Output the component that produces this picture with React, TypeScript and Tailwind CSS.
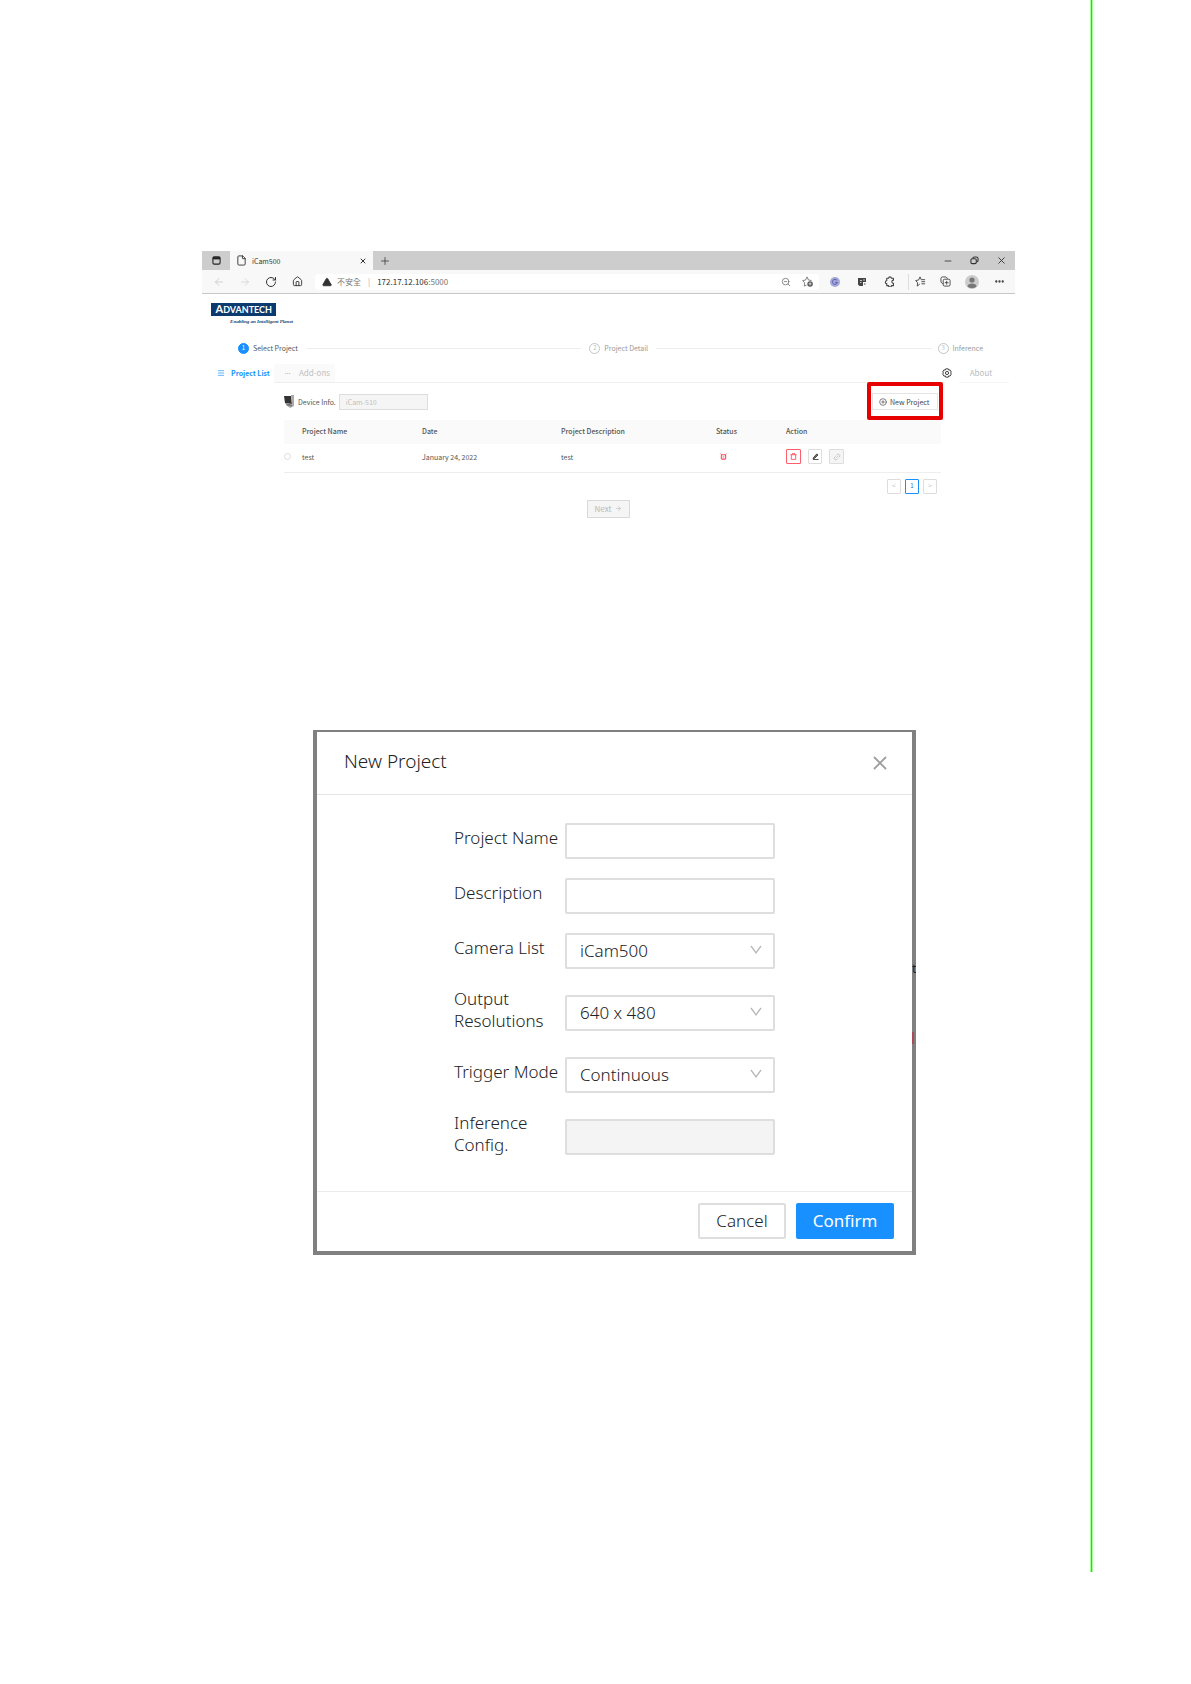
import type { ReactNode } from "react"
import {
  AlertTriangle,
  ArrowLeft,
  ArrowRight,
  CirclePlus,
  File,
  Home,
  Link2,
  Menu,
  Minus,
  MoreHorizontal,
  Plus,
  RotateCw,
  X,
  ZoomOut,
} from "lucide-react"

const toolButton = "flex h-4 w-4 items-center justify-center"

function TitleBar() {
  return (
    <div className="flex h-[19px] items-stretch bg-[#cdcdcd] text-[#333]">
      <button aria-label="Tab actions" className="flex w-7 items-center justify-center">
        <svg viewBox="0 0 10 10" className="h-[9px] w-[9px]" fill="none" stroke="#222">
          <rect x="1" y="1" width="8" height="8" rx="1.5" strokeWidth="1.2" />
          <path d="M1 2.5h8" strokeWidth="2.5" />
        </svg>
      </button>
      <div className="flex w-[143px] items-center bg-[#f8f8f8] px-1.5">
        <File size={11} strokeWidth={2} />
        <span className="ml-[5px] flex-1 text-[7px] leading-3">iCam500</span>
        <button aria-label="Close tab">
          <X size={8} strokeWidth={3} />
        </button>
      </div>
      <button aria-label="New tab" className="flex w-6 items-center justify-center">
        <Plus size={12} strokeWidth={1.5} />
      </button>
      <div className="ml-auto flex items-center gap-[17px] pr-2">
        <button aria-label="Minimize">
          <Minus size={10} strokeWidth={2} />
        </button>
        <button aria-label="Restore">
          <svg viewBox="0 0 10 10" className="h-[9px] w-[9px]" fill="none" stroke="#333" strokeWidth="1.2">
            <rect x="1" y="3" width="6" height="5.5" rx="1.5" />
            <path d="M3 2.5C3.3 1.5 4 1.2 5 1.2h2A2 2 0 0 1 9 3.2v1.5C9 6 8.5 6.5 7.5 6.7" />
          </svg>
        </button>
        <button aria-label="Close window">
          <X size={11} strokeWidth={2} />
        </button>
      </div>
    </div>
  )
}

function AddressBar() {
  return (
    <div className="flex h-6 items-center border-b border-[#c8c8c8] bg-[#f8f8f8] text-[#333]">
      <div className="flex items-center gap-2.5 pr-2.5 pl-[9px]">
        <button aria-label="Back" className={`${toolButton} text-[#c4c4c4]`}>
          <ArrowLeft size={12} strokeWidth={1.5} />
        </button>
        <button aria-label="Forward" className={`${toolButton} text-[#d0d0d0]`}>
          <ArrowRight size={12} strokeWidth={1.5} />
        </button>
        <button aria-label="Reload" className={toolButton}>
          <RotateCw size={12} strokeWidth={2} />
        </button>
        <button aria-label="Home" className={toolButton}>
          <Home size={11} strokeWidth={2} />
        </button>
      </div>
      <div className="flex h-4 flex-1 items-center rounded-sm bg-white pr-1 pl-[7px] text-[8px] leading-4">
        <AlertTriangle size={10} fill="#333" className="mr-[5px]" />
        <span className="text-[#777]">不安全</span>
        <span className="mx-[7px] text-[#aaa]">|</span>
        <span>
          172.17.12.106<span className="text-[#777]">:5000</span>
        </span>
        <button aria-label="Zoom" className={`${toolButton} ml-auto text-[#777]`}>
          <ZoomOut size={10} />
        </button>
        <button aria-label="Add to favorites" className={`${toolButton} ml-[5px]`}>
          <svg viewBox="0 0 12 12" className="h-[11px] w-[11px]" fill="none" stroke="#777" strokeLinejoin="round">
            <path d="M5 10 2.4 11l.5-3.6L.7 5l3.2-.6L5.5 1l1.6 3.4 3.3.5" />
            <circle cx="8.8" cy="8.6" r="3" fill="#555" stroke="none" />
            <path d="M8.8 7v3.2M7.2 8.6h3.2" stroke="#fff" strokeWidth=".8" />
          </svg>
        </button>
      </div>
      <div className="flex items-center gap-[11px] pr-2 pl-2">
        <button aria-label="Grammar extension" className={toolButton}>
          <svg viewBox="0 0 10 10" className="h-[10px] w-[10px]">
            <circle cx="5" cy="5" r="5" fill="#a3a8d8" />
            <path d="M7 3.4A2.5 2.5 0 1 0 7.4 5.4H5.2" fill="none" stroke="#5b62ac" strokeWidth="1" />
          </svg>
        </button>
        <button aria-label="Extension" className={toolButton}>
          <svg viewBox="0 0 10 10" className="h-[10px] w-[10px]">
            <path d="M1 1h8v4H6v4H2.5L1 7.5z" fill="#444" />
            <path d="M3 3.5h2M6 3h2M3 5.5h1.5" stroke="#ddd" strokeWidth=".8" />
            <path d="M7 7h1.5" stroke="#444" strokeWidth="1" />
          </svg>
        </button>
        <button aria-label="Extensions" className={toolButton}>
          <svg viewBox="0 0 12 12" className="h-[11px] w-[11px]" fill="none" stroke="#444" strokeWidth="1.2" strokeLinejoin="round">
            <path d="M3 2.500h2a1.500 1.500 0 0 1 3 0h2.300v2a1.700 1.700 0 0 0 0 3.500v2.500H8a1.500 1.500 0 0 1-3 0H3V8.300a1.600 1.600 0 0 1 0-3.200z" />
          </svg>
        </button>
        <button aria-label="Favorites" className="flex h-4 w-[18px] items-center justify-end border-l border-[#ddd]">
          <svg viewBox="0 0 12 12" className="h-[11px] w-[11px]" fill="none" stroke="#444" strokeLinejoin="round">
            <path d="M5.2 8.8 2.4 11l.5-3.6L.7 5l3.2-.6L5.5 1l1.3 3H11M7 6.2h4M7 8.5h4" />
          </svg>
        </button>
        <button aria-label="Collections" className={toolButton}>
          <svg viewBox="0 0 12 12" className="h-[11px] w-[11px]" fill="none" stroke="#444">
            <path d="M3.5 8.5C2 8.3 1 7 1 5.5V3a2 2 0 0 1 2-2h2.5C7 1 8 2 8.2 3" />
            <rect x="3.5" y="3.5" width="7.5" height="7.5" rx="1.5" />
            <path d="M7.250 5.3v4M5.250 7.3h4" />
          </svg>
        </button>
        <button aria-label="Profile" className={toolButton}>
          <svg viewBox="0 0 14 14" className="h-[14px] w-[14px]">
            <circle cx="7" cy="7" r="7" fill="#ccc" />
            <circle cx="7" cy="5" r="2.6" fill="#777" />
            <path d="M2.5 11.5c0-4 9-4 9 0-2.5 2.2-6.5 2.2-9 0z" fill="#777" />
          </svg>
        </button>
        <button aria-label="More" className={toolButton}>
          <MoreHorizontal size={11} strokeWidth={3} />
        </button>
      </div>
    </div>
  )
}

function Logo() {
  return (
    <div className="flex w-[82px] flex-col text-[#0b3a6e]">
      <div className="flex h-[13px] w-[65px] items-center justify-end bg-[#0b3a6e] pr-1 font-['Lato'] text-[11px] leading-3 font-bold text-white">
        <span>
          A<span className="text-[9px]">DVANTECH</span>
        </span>
      </div>
      <span className="self-end font-['Liberation_Serif'] text-[5px] leading-3 font-bold whitespace-nowrap italic">
        Enabling an Intelligent Planet
      </span>
    </div>
  )
}

function Step({ number, label, active = false }: { number: number; label: string; active?: boolean }) {
  return (
    <li className={`flex items-center gap-1 ${active ? "text-[#555]" : "text-[#999]"}`}>
      <span
        className={`flex h-[11px] w-[11px] items-center justify-center rounded-full border text-[6px] leading-none ${
          active ? "border-[#1890ff] bg-[#1890ff] text-white" : "border-[#c4c4c4] text-[#bbb]"
        }`}
      >
        {number}
      </span>
      {label}
    </li>
  )
}

function GearIcon() {
  return (
    <svg viewBox="0 0 12 12" className="h-[10px] w-[10px]" fill="none" stroke="#444" strokeWidth="1.2">
      <path d="M4.5 1h3l.5 1.5 1.7-.2 1.5 2.5L10.2 6l1 1.2-1.5 2.5L8 9.500 7.500 11h-3L4 9.500l-1.700.2L.8 7.200 1.800 6l-1-1.200 1.500-2.500L4 2.500z" />
      <circle cx="6" cy="6" r="1.9" />
    </svg>
  )
}

function DeviceIcon() {
  return (
    <svg viewBox="0 0 10 13" className="h-[13px] w-[10px]">
      <path d="M0 1h7l1 8-7-1z" fill="#333" />
      <path d="M7 0h3v11l-4 2-4-3 6 .5z" fill="#aaa" />
      <path d="M1 8l7 1.5v2L3 10.5z" fill="#777" />
    </svg>
  )
}

function ProjectTable() {
  return (
    <table className="w-full table-fixed text-left text-[#555]">
      <colgroup>
        <col className="w-[18px]" />
        <col className="w-[120px]" />
        <col className="w-[139px]" />
        <col className="w-[155px]" />
        <col className="w-[70px]" />
        <col />
      </colgroup>
      <thead>
        <tr className="h-6 bg-[#fafafa]">
          <th aria-label="Select" />
          <th className="pb-[3px] font-medium">Project Name</th>
          <th className="pb-[3px] font-medium">Date</th>
          <th className="pb-[3px] font-medium">Project Description</th>
          <th className="pb-[3px] font-medium">Status</th>
          <th className="pb-[3px] font-medium">Action</th>
        </tr>
      </thead>
      <tbody>
        <tr className="h-7 border-b border-[#eee]">
          <td className="pb-0.5">
            <input
              type="radio"
              name="project"
              aria-label="test"
              className="block h-[7px] w-[7px] appearance-none rounded-full border border-[#ddd]"
            />
          </td>
          <td className="pb-0.5">test</td>
          <td className="pb-0.5">January 24, 2022</td>
          <td className="pb-0.5">test</td>
          <td className="pb-0.5">
            <svg viewBox="0 0 8 8" className="ml-1 h-[7px] w-[7px]" fill="none" stroke="#f5485a">
              <rect x="1.5" y="2" width="5" height="5" rx="1" strokeWidth="1.2" />
              <path d="M3 4.5h2M.5.8 2 2M7.5.8 6 2" />
            </svg>
          </td>
          <td className="pb-0.5">
            <div className="flex items-center gap-[7px]">
              <button
                aria-label="Delete"
                className="flex h-[15px] w-[15px] items-center justify-center rounded-[1px] border border-[#ff5c6c]"
              >
                <svg viewBox="0 0 8 8" className="h-[7px] w-[7px]" fill="none" stroke="#ff4d5f">
                  <path d="M.5 2h7M2.5 2V.7h3V2M1.5 2v5.3h5V2" />
                </svg>
              </button>
              <button
                aria-label="Edit"
                className="flex h-[15px] w-[14px] items-center justify-center rounded-[1px] border border-[#ddd]"
              >
                <svg viewBox="0 0 8 8" className="h-[7px] w-[7px]" fill="#777" stroke="#333">
                  <path d="M1.5 5.5 5.5 1l1.3 1.3L3 6l-1.8.3zM1 7.4h6.5" />
                </svg>
              </button>
              <button
                disabled
                aria-label="Link"
                className="flex h-[15px] w-[15px] items-center justify-center rounded-[1px] border border-[#ddd] bg-[#f5f5f5] text-[#bbb]"
              >
                <Link2 size={8} className="-rotate-45" />
              </button>
            </div>
          </td>
        </tr>
      </tbody>
    </table>
  )
}

function ProjectPage() {
  const pager = "flex h-[15px] w-[14px] items-center justify-center rounded-[1px] border"
  return (
    <div className="text-[7px] leading-3">
      <div className="px-[9px] pt-[9px]">
        <Logo />
      </div>
      <ol className="flex items-center pt-3.5 pr-8 pl-9">
        <Step number={1} label="Select Project" active />
        <li aria-hidden className="mr-2 ml-2 h-px flex-1 bg-[#eee]" />
        <Step number={2} label="Project Detail" />
        <li aria-hidden className="mr-1.5 ml-2 h-px flex-1 bg-[#eee]" />
        <Step number={3} label="Inference" />
      </ol>
      <nav className="mt-2.5 flex h-[19px] items-stretch pr-1.5 pl-[7px] text-[8px]">
        <button className="flex w-[65px] items-center gap-1.5 pb-0.5 pl-2 text-[7px] font-bold whitespace-nowrap text-[#1890ff]">
          <Menu size={8} strokeWidth={2} className="shrink-0" />
          Project List
        </button>
        <button className="flex w-[61px] items-center gap-2 border-b border-[#eee] bg-[#fafafa] pl-2.5 text-[#c0c0c0]">
          <MoreHorizontal size={7} />
          Add-ons
        </button>
        <div className="flex-1 border-b border-[#f0f0f0]" />
        <button aria-label="Settings" className="flex w-6 items-center justify-center pb-0.5">
          <GearIcon />
        </button>
        <button className="w-[50px] border-b border-[#f5f5f5] pr-1.5 text-[#bbb]">About</button>
      </nav>

      <div className="pr-[74px] pl-[82px]">
        <div className="flex h-[37px] items-center">
          <DeviceIcon />
          <label htmlFor="device" className="mr-[3px] ml-1 text-[#555]">
            Device Info.
          </label>
          <input
            id="device"
            disabled
            defaultValue="iCam-510"
            className="h-4 w-[89px] border border-[#ddd] bg-[#f5f5f5] px-1.5 text-[#c0c0c0]"
          />
          <div className="relative mr-[3px] ml-auto">
            <button className="flex h-[17px] w-[66px] items-center gap-[3px] border border-[#e4e4e4] pl-1.5 whitespace-nowrap text-[#444]">
              <CirclePlus size={8} className="shrink-0" />
              New Project
            </button>
            <div className="pointer-events-none absolute -inset-x-[5px] -top-[11px] -bottom-[10px] rounded-[2px] border-4 border-[#e60000]" />
          </div>
        </div>
        <ProjectTable />
        <div className="mt-1.5 flex justify-end gap-1 pr-1 text-[6px] text-[#bbb]">
          <button aria-label="Previous page" className={`${pager} border-[#ddd]`}>
            &lt;
          </button>
          <button className={`${pager} border-[#1890ff] text-[#1870d0]`}>1</button>
          <button aria-label="Next page" className={`${pager} border-[#ddd]`}>
            &gt;
          </button>
        </div>
      </div>
      <div className="mt-1.5 flex justify-center">
        <button
          disabled
          className="flex h-[18px] w-[43px] items-center justify-center gap-1 border border-[#d9d9d9] bg-[#f5f5f5] text-[8px] text-[#b8b8b8]"
        >
          Next
          <ArrowRight size={7} />
        </button>
      </div>
    </div>
  )
}

const control = "h-9 w-full rounded-[2px] border-2 border-[#dedede]"

function Field({ id, label, children }: { id: string; label: string; children: ReactNode }) {
  return (
    <div className="flex items-center">
      <label htmlFor={id} className="w-[111px] shrink-0 pr-1 pb-1.5 leading-[22px]">
        {label}
      </label>
      <div className="relative w-[210px]">{children}</div>
    </div>
  )
}

function SelectField({ id, label, value }: { id: string; label: string; value: string }) {
  return (
    <Field id={id} label={label}>
      <select id={id} className={`${control} block appearance-none bg-white pl-[13px]`}>
        <option>{value}</option>
      </select>
      <svg
        viewBox="0 0 12 12"
        className="pointer-events-none absolute top-[11px] right-[13px] h-3 w-3"
        fill="none"
        stroke="#b8b8b8"
        strokeWidth="1.3"
      >
        <path d="m1 2 5 7 5-7" />
      </svg>
    </Field>
  )
}

function NewProjectDialog() {
  return (
    <section
      role="dialog"
      aria-labelledby="dialog-title"
      className="relative border-4 border-t-2 border-[#808080] bg-white text-[17px] font-light text-[#222]"
    >
      <header className="flex h-[63px] items-center justify-between border-b border-[#e4e4e4] pr-[21px] pl-[27px]">
        <h2 id="dialog-title" className="pb-0.5 text-[19px]">
          New Project
        </h2>
        <button aria-label="Close">
          <X size={22} strokeWidth={2} className="text-[#a0a0a0]" />
        </button>
      </header>
      <form className="flex flex-col gap-[19px] pt-7 pb-[29px] pl-[137px]">
        <Field id="name" label="Project Name">
          <input id="name" className={`${control} block px-3`} />
        </Field>
        <Field id="description" label="Description">
          <input id="description" className={`${control} block px-3`} />
        </Field>
        <SelectField id="camera" label="Camera List" value="iCam500" />
        <SelectField id="resolution" label="Output Resolutions" value="640 x 480" />
        <SelectField id="trigger" label="Trigger Mode" value="Continuous" />
        <Field id="config" label="Inference Config.">
          <input id="config" disabled className={`${control} block bg-[#f4f4f4] px-3`} />
        </Field>
      </form>
      <footer className="flex justify-end gap-2.5 border-t border-[#ececec] pt-[11px] pr-[18px] pb-3">
        <button className="h-9 w-[88px] rounded-[2px] border-2 border-[#dedede]">Cancel</button>
        <button className="h-9 w-[98px] rounded-[2px] bg-[#1890ff] font-normal text-white">Confirm</button>
      </footer>
      {/* slivers of the dimmed page behind the dialog */}
      <span className="absolute top-[228px] -right-1 w-1 overflow-hidden text-[13px] leading-4 font-normal text-[#222]">t</span>
      <span className="absolute top-[300px] -right-[2px] h-3 w-0.5 bg-[#a84a5c]" />
    </section>
  )
}

export default function App() {
  return (
    <div className="flex min-h-screen bg-white pb-28 font-['Noto_Sans','Noto_Sans_CJK_TC',sans-serif]">
      <main className="min-w-0 flex-1 pt-[251px]">
        <div className="mr-[75px] ml-[202px] font-['Noto_Sans_CJK_TC',sans-serif]">
          <TitleBar />
          <AddressBar />
          <ProjectPage />
        </div>
        <div className="mt-[212px] mr-[174px] ml-[313px]">
          <NewProjectDialog />
        </div>
      </main>
      <div className="mr-[98px] w-[3px] border-x border-[#a4ff96] bg-[#12e612]" />
    </div>
  )
}
